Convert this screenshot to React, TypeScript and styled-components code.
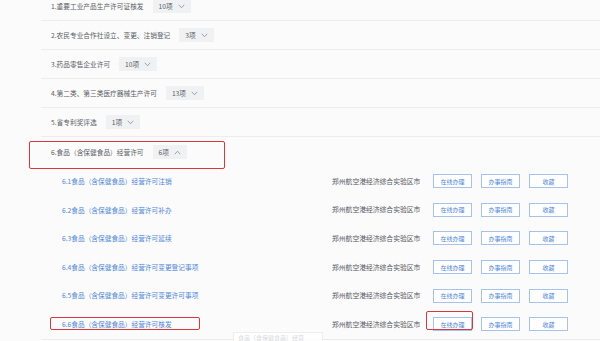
import React from "react";
import styled, { createGlobalStyle } from "styled-components";

const Global = createGlobalStyle`
  html, body { margin: 0; padding: 0; background: #fbfbfc; overflow: hidden; }
  body { font-family: "Noto Sans CJK SC", "Noto Sans", sans-serif; }
  * { box-sizing: border-box; }
`;

const Page = styled.div`
  width: 600px;
  height: 341px;
  overflow: hidden;
  background: #fbfbfc;
  position: relative;
`;

const List = styled.div`
  margin-top: -8px;
  padding-left: 41px;
`;

const Row = styled.div<{ $open?: boolean }>`
  position: relative;
  display: flex;
  align-items: center;
  height: ${(p) => (p.$open ? "30px" : "29px")};
  padding-left: 10px;
  border-bottom: ${(p) => (p.$open ? "none" : "1.5px solid #ececee")};
`;

const Title = styled.span`
  font-size: 6.7px;
  color: #5a5d63;
  line-height: 1;
  white-space: nowrap;
`;

const Badge = styled.span`
  display: inline-flex;
  align-items: center;
  gap: 5px;
  height: 14px;
  margin-left: 9px;
  padding: 0 6px 0 6px;
  background: #f0f1f3;
  font-size: 6.7px;
  color: #5a5d63;
`;

const RedBox = styled.div`
  position: absolute;
  border: 1.5px solid #d7373d;
  border-radius: 2px;
  pointer-events: none;
`;

const SubList = styled.div`
  border-bottom: 1.5px solid #ececee;
`;

const SubRow = styled.div`
  position: relative;
  display: grid;
  grid-template-columns: 1fr 92px 39px 39px 39px;
  column-gap: 9px;
  align-items: center;
  height: 28.6px;
  padding-left: 21px;
  padding-right: 32px;
`;

const SubName = styled.span`
  font-size: 6.7px;
  color: #4f87d6;
  white-space: nowrap;
  line-height: 1;
`;

const Location = styled.span`
  font-size: 6.8px;
  color: #55585e;
  white-space: nowrap;
  line-height: 1;
`;

const Btn = styled.span`
  position: relative;
  display: flex;
  align-items: center;
  justify-content: center;
  height: 14px;
  border: 1px solid #a7c3ea;
  background: #ffffff;
  font-size: 6px;
  color: #4f87d6;
  white-space: nowrap;
`;

const Tip = styled.div`
  position: absolute;
  left: 233px;
  top: 332px;
  width: 90px;
  height: 12px;
  background: rgba(255, 255, 255, 0.85);
  border: 1px solid #eeeeef;
  font-size: 6px;
  color: #d8d9dc;
  padding-left: 4px;
  line-height: 10px;
  white-space: nowrap;
  overflow: hidden;
`;

const Chevron: React.FC<{ up?: boolean }> = ({ up }) => (
  <svg width="7" height="5" viewBox="0 0 7 5">
    <path
      d={up ? "M0.8 4.2 L3.5 1.2 L6.2 4.2" : "M0.8 0.8 L3.5 3.8 L6.2 0.8"}
      fill="none"
      stroke="#8a8d93"
      strokeWidth="0.8"
    />
  </svg>
);

const rows = [
  { t: "1.重要工业产品生产许可证核发", n: "10项" },
  { t: "2.农民专业合作社设立、变更、注销登记", n: "3项" },
  { t: "3.药品零售企业许可", n: "10项" },
  { t: "4.第二类、第三类医疗器械生产许可", n: "13项" },
  { t: "5.省专利奖评选", n: "1项" },
];

const subs = [
  "6.1食品（含保健食品）经营许可注销",
  "6.2食品（含保健食品）经营许可补办",
  "6.3食品（含保健食品）经营许可延续",
  "6.4食品（含保健食品）经营许可变更登记事项",
  "6.5食品（含保健食品）经营许可变更许可事项",
  "6.6食品（含保健食品）经营许可核发",
];

export default function App() {
  return (
    <Page>
      <Global />
      <List>
        {rows.map((r) => (
          <Row key={r.t}>
            <Title>{r.t}</Title>
            <Badge>
              {r.n}
              <Chevron />
            </Badge>
          </Row>
        ))}
        <Row $open>
          <Title>6.食品（含保健食品）经营许可</Title>
          <Badge>
            6项
            <Chevron up />
          </Badge>
          <RedBox style={{ left: -12, top: 4, width: 196, height: 28 }} />
        </Row>
        <SubList>
          {subs.map((s, i) => (
            <SubRow key={s}>
              <SubName>{s}</SubName>
              <Location>郑州航空港经济综合实验区市</Location>
              <Btn>在线办理</Btn>
              <Btn>办事指南</Btn>
              <Btn>收藏</Btn>
              {i === 5 && (
                <>
                  <RedBox style={{ left: 9, top: 7, width: 150, height: 13 }} />
                  <RedBox style={{ left: 385, top: 1, width: 47, height: 19 }} />
                </>
              )}
            </SubRow>
          ))}
        </SubList>
      </List>
      <Tip>食品（含保健食品）经营</Tip>
    </Page>
  );
}
